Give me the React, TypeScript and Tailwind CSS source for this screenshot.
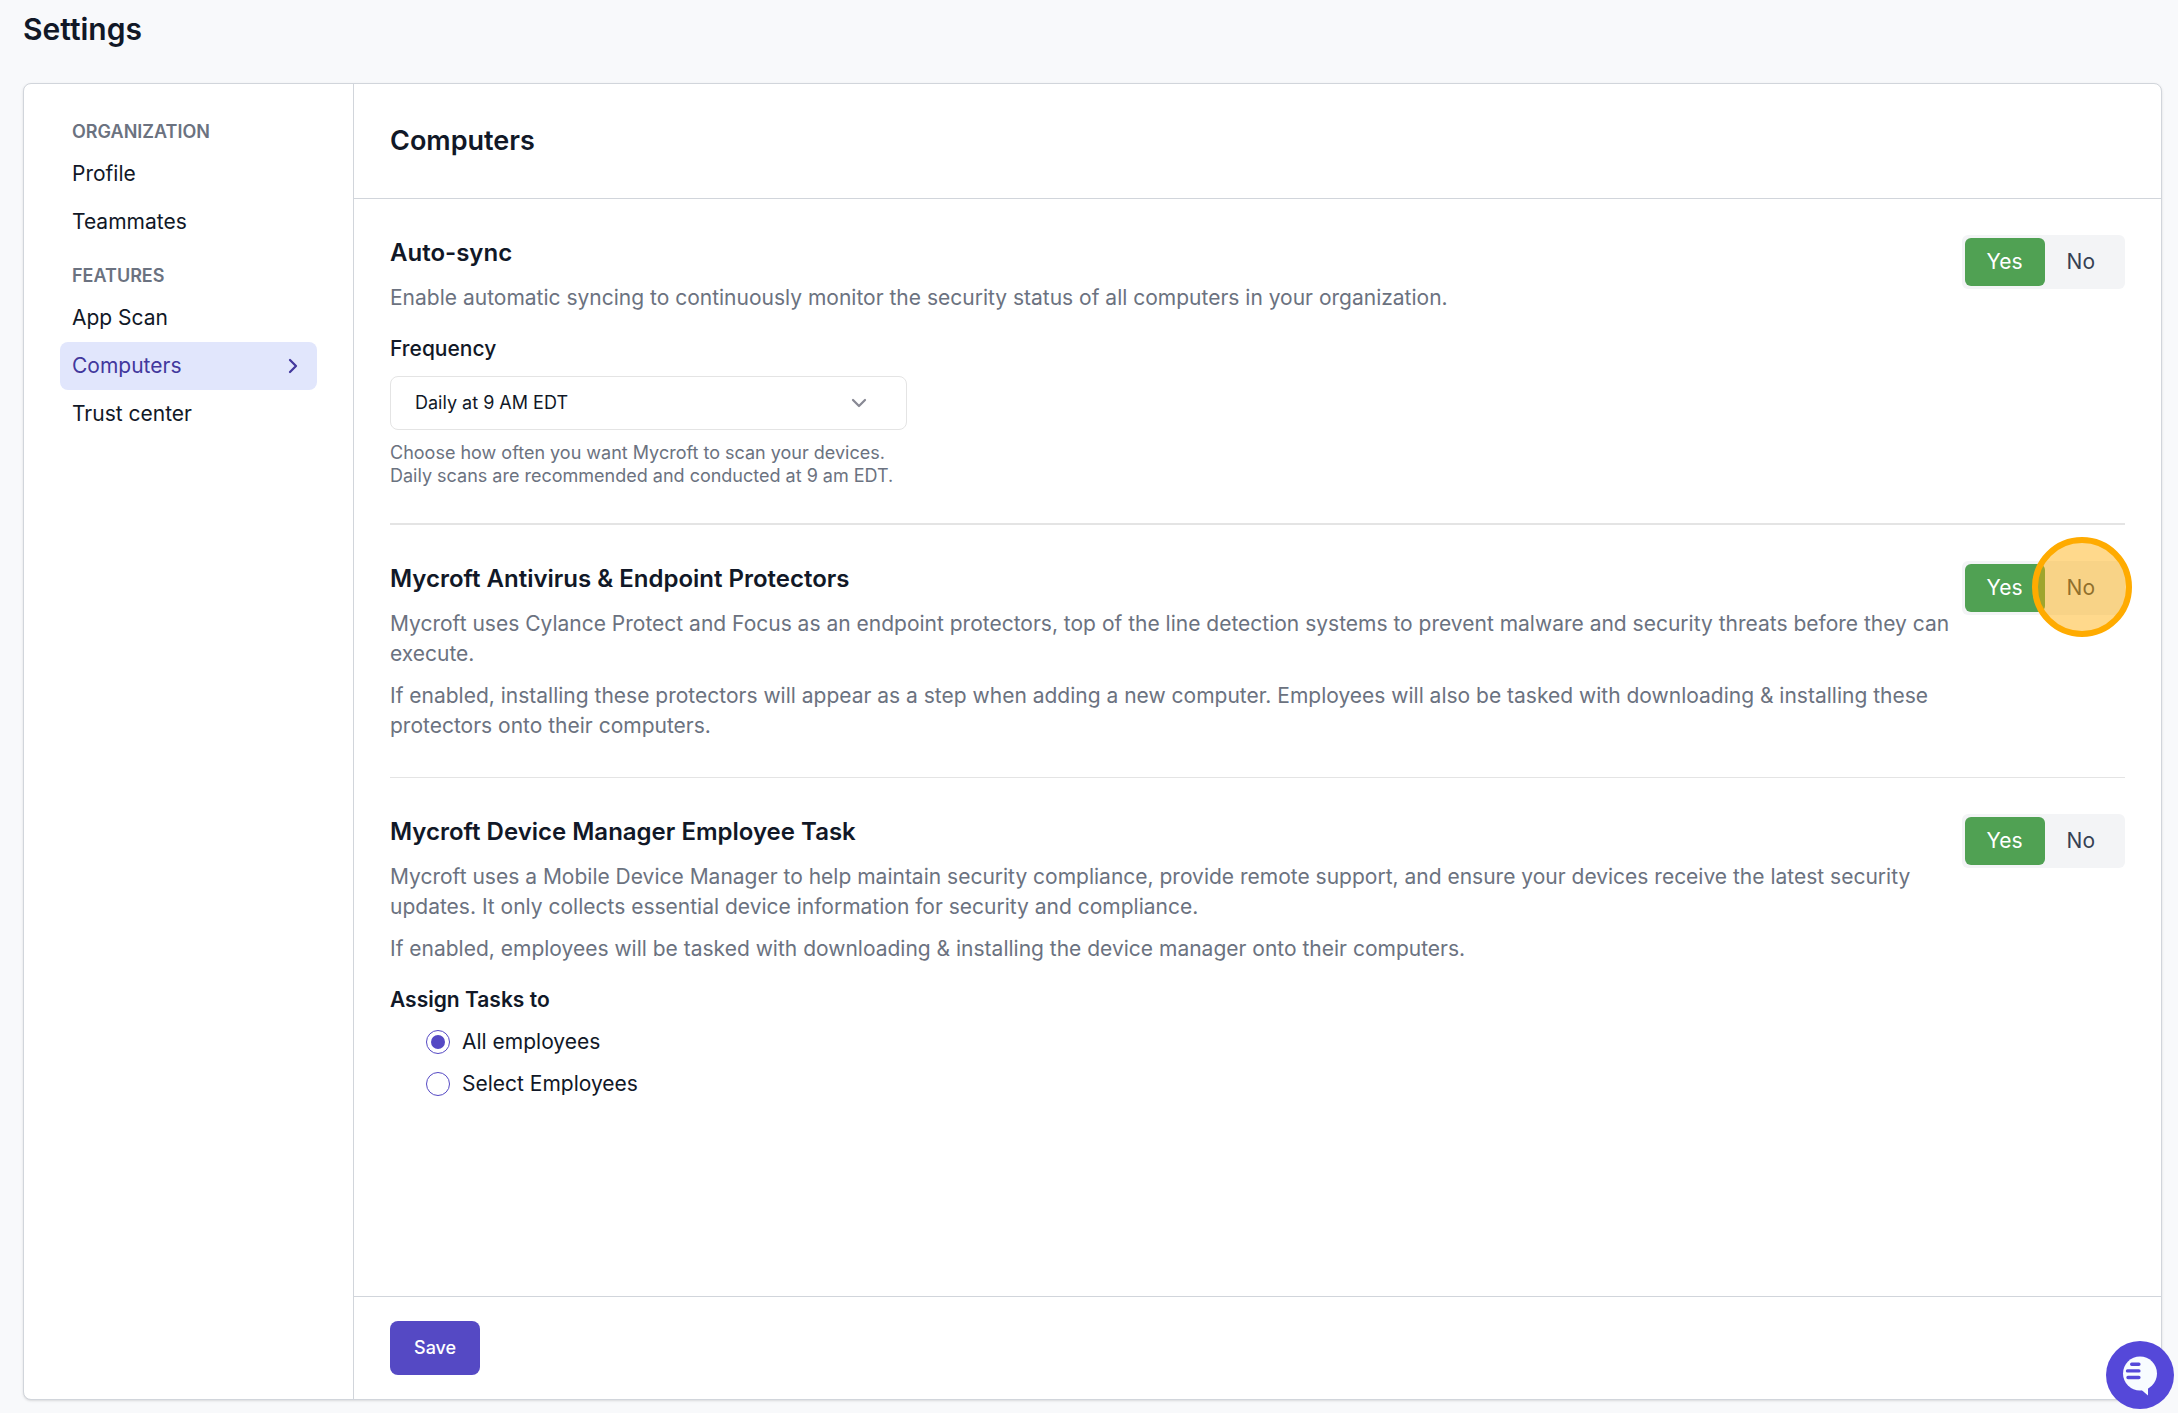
import { useState } from 'react';
import type { ReactNode } from 'react';

interface NavGroup {
  title: string;
  items: string[];
}

const navGroups: NavGroup[] = [
  { title: 'ORGANIZATION', items: ['Profile', 'Teammates'] },
  { title: 'FEATURES', items: ['App Scan', 'Computers', 'Trust center'] },
];

const assignOptions = ['All employees', 'Select Employees'];

const Sidebar = ({ active }: { active: string }) => (
  <nav className="flex w-[330px] shrink-0 flex-col gap-[18px] border-r border-[#d1d5db] p-9">
    {navGroups.map((group) => (
      <div key={group.title}>
        <h2 className="mb-1.5 px-3 text-[18px] leading-6 font-semibold text-[#6b7280]">{group.title}</h2>
        <ul>
          {group.items.map((item) => (
            <li key={item}>
              {item === active ? (
                <a
                  href="#"
                  aria-current="page"
                  className="flex h-12 items-center justify-between rounded-lg bg-[#e1e6fc] px-3 text-[21px] leading-[30px] text-[#42389d]"
                >
                  {item}
                  <svg className="size-6" viewBox="0 0 24 24" fill="none" stroke="currentColor" strokeWidth="2.25" strokeLinecap="round" strokeLinejoin="round">
                    <path d="M9 6l6 6-6 6" />
                  </svg>
                </a>
              ) : (
                <a href="#" className="flex h-12 items-center px-3 text-[21px] leading-[30px]">
                  {item}
                </a>
              )}
            </li>
          ))}
        </ul>
      </div>
    ))}
  </nav>
);

interface YesNoToggleProps {
  label: string;
  highlighted?: boolean;
}

const YesNoToggle = ({ label, highlighted }: YesNoToggleProps) => {
  const [enabled, setEnabled] = useState(true);
  const on = 'bg-[#50a153] text-white';
  const off = 'text-gray-700';

  return (
    <div
      role="group"
      aria-label={label}
      className="relative flex shrink-0 rounded-md bg-gray-100 p-[3px] pr-2 text-[21px] leading-[30px]"
    >
      <button
        type="button"
        aria-pressed={enabled}
        onClick={() => setEnabled(true)}
        className={`h-12 rounded-md px-[22px] ${enabled ? on : off}`}
      >
        Yes
      </button>
      <button
        type="button"
        aria-pressed={!enabled}
        onClick={() => setEnabled(false)}
        className={`h-12 rounded-md px-[22px] ${enabled ? off : on}`}
      >
        No
      </button>
      {highlighted && (
        <span className="pointer-events-none absolute -top-6 -right-[7px] size-[100px] rounded-full border-6 border-[#ffab00] bg-[#ffab00]/45" />
      )}
    </div>
  );
};

interface SettingSectionProps {
  title: string;
  paragraphs: string[];
  highlighted?: boolean;
  children?: ReactNode;
}

const SettingSection = ({ title, paragraphs, highlighted, children }: SettingSectionProps) => (
  <section className="flex items-start gap-3 py-9">
    <div className="flex-1">
      <h3 className="text-[24px] leading-9 font-semibold">{title}</h3>
      {paragraphs.map((text) => (
        <p key={text} className="mt-3 text-[21px] leading-[30px] text-[#6b7280]">
          {text}
        </p>
      ))}
      {children}
    </div>
    <YesNoToggle label={title} highlighted={highlighted} />
  </section>
);

const FrequencyField = () => (
  <div className="mt-[21px] w-[517px]">
    <label htmlFor="frequency" className="block text-[21px] leading-[30px] font-medium">
      Frequency
    </label>
    <div className="relative mt-3">
      <select
        id="frequency"
        className="h-[54px] w-full appearance-none rounded-lg border border-[#e4e4e4] bg-white px-6 text-[18px] leading-6"
      >
        <option>Daily at 9 AM EDT</option>
        <option>Weekly</option>
      </select>
      <svg
        className="pointer-events-none absolute top-[15px] right-9 size-6"
        viewBox="0 0 24 24"
        fill="none"
        stroke="#888994"
        strokeWidth="2.25"
        strokeLinecap="round"
        strokeLinejoin="round"
      >
        <path d="M6 9l6 6 6-6" />
      </svg>
    </div>
    <p className="mt-[11px] text-[18px] leading-[23px] text-[#6b7280]">
      Choose how often you want Mycroft to scan your devices.
      <br />
      Daily scans are recommended and conducted at 9 am EDT.
    </p>
  </div>
);

const AssignTasks = () => {
  const [assignee, setAssignee] = useState(assignOptions[0]);

  return (
    <fieldset className="mt-[21px]">
      <legend className="text-[21px] leading-[30px] font-semibold">Assign Tasks to</legend>
      <div className="mt-3 flex flex-col gap-3 pl-9">
        {assignOptions.map((option) => (
          <label key={option} className="flex items-center gap-3 text-[21px] leading-[30px]">
            <input
              type="radio"
              name="assignee"
              checked={assignee === option}
              onChange={() => setAssignee(option)}
              className="grid size-6 appearance-none place-items-center rounded-full border border-[#5549c4] before:size-3.5 before:rounded-full checked:before:bg-[#5549c4]"
            />
            {option}
          </label>
        ))}
      </div>
    </fieldset>
  );
};

const ChatLauncher = () => (
  <button
    type="button"
    aria-label="Open chat"
    className="fixed right-1 bottom-1 size-[68px] rounded-full bg-[#5548d9]"
  >
    <svg className="size-full" viewBox="0 0 68 68" fill="none">
      <circle cx="34" cy="32.5" r="17" fill="#f8fcff" />
      <path d="M35 48.5l7 6V44z" fill="#f8fcff" />
      <path d="M25.7 23.2h7.2M21.5 29.9h11.4M22 36.5h10.9" stroke="#5548d9" strokeWidth="3.4" strokeLinecap="round" />
    </svg>
  </button>
);

export default function App() {
  return (
    <div className="flex min-h-screen flex-col bg-[#f8f9fb] px-[23px] pr-4 pb-[13px] font-[Inter,sans-serif] text-[#111827]">
      <h1 className="pt-2 pb-[33px] text-[30px] leading-[42px] font-semibold">Settings</h1>
      <div className="flex flex-1 rounded-lg border border-[#d1d5db] bg-white shadow-sm">
        <Sidebar active="Computers" />
        <main className="flex min-w-0 flex-1 flex-col">
          <header className="border-b border-[#d1d5db] p-9">
            <h2 className="text-[27px] leading-[42px] font-semibold">Computers</h2>
          </header>
          <div className="flex-1 px-9">
            <SettingSection
              title="Auto-sync"
              paragraphs={[
                'Enable automatic syncing to continuously monitor the security status of all computers in your organization.',
              ]}
            >
              <FrequencyField />
            </SettingSection>
            <hr className="border-t-2 border-[#e4e4e4]" />
            <SettingSection
              title="Mycroft Antivirus & Endpoint Protectors"
              paragraphs={[
                'Mycroft uses Cylance Protect and Focus as an endpoint protectors, top of the line detection systems to prevent malware and security threats before they can execute.',
                'If enabled, installing these protectors will appear as a step when adding a new computer. Employees will also be tasked with downloading & installing these protectors onto their computers.',
              ]}
              highlighted
            />
            <hr className="border-[#e4e4e4]" />
            <SettingSection
              title="Mycroft Device Manager Employee Task"
              paragraphs={[
                'Mycroft uses a Mobile Device Manager to help maintain security compliance, provide remote support, and ensure your devices receive the latest security updates. It only collects essential device information for security and compliance.',
                'If enabled, employees will be tasked with downloading & installing the device manager onto their computers.',
              ]}
            >
              <AssignTasks />
            </SettingSection>
          </div>
          <footer className="border-t border-[#d1d5db] px-9 py-6">
            <button type="button" className="h-[54px] rounded-lg bg-[#5549c4] px-6 text-[18px] leading-6 font-medium text-white">
              Save
            </button>
          </footer>
        </main>
      </div>
      <ChatLauncher />
    </div>
  );
}
